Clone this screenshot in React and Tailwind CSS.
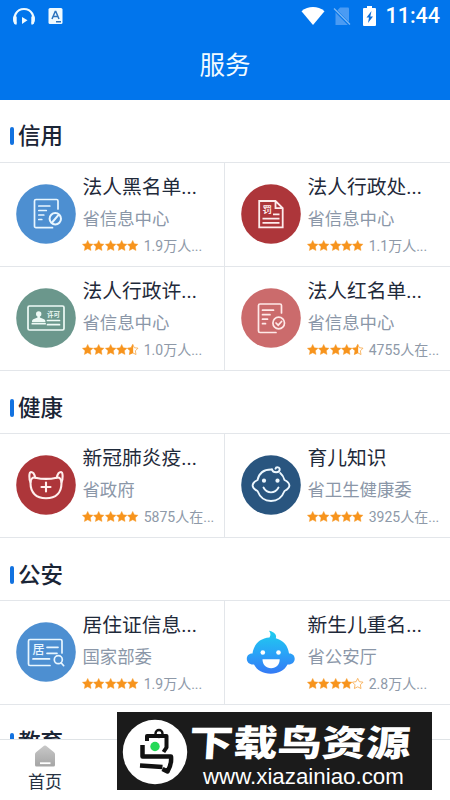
import React from "react";

const BlacklistIcon = () => (
  <svg viewBox="0 0 60 60" className="size-[60px]" fill="none" stroke="#e8f6ff" strokeWidth="1.7" strokeLinecap="round">
    <circle cx="30" cy="30" r="29.8" fill="#4d8fd1" stroke="none" />
    <path d="M36.5 43.7H20a1.5 1.5 0 0 1-1.5-1.5V17a1.5 1.5 0 0 1 1.5-1.5h20.5A1.5 1.5 0 0 1 42 17v8" />
    <path d="M22.8 22h11M22.8 26.5h7.5M22.8 31h5M22.8 35.5h3" />
    <circle cx="39.3" cy="34.7" r="5.7" strokeWidth="2" />
    <path d="m36.5 38 5.6-6.6" strokeWidth="2" />
  </svg>
);

const PenaltyIcon = () => (
  <svg viewBox="0 0 60 60" className="size-[60px]" fill="none" stroke="#fdecec" strokeWidth="1.8">
    <circle cx="30" cy="30" r="29.8" fill="#ad363a" stroke="none" />
    <path d="M34.5 17H18.2v26.3h23.5V24.2zM34.5 17v7.2h7.2" />
    <text x="21.5" y="29.2" fontSize="9.5" fontWeight="700" fill="#fdecec" stroke="none" className="font-['Noto_Sans_CJK_SC',sans-serif]">罚</text>
    <path d="M32 30.3h6.5M21.5 34.6h17M21.5 38.9h17" />
  </svg>
);

const LicenseIcon = () => (
  <svg viewBox="0 0 60 60" className="size-[60px]" fill="none" stroke="#eefaf6" strokeWidth="1.7" strokeLinecap="round">
    <circle cx="30" cy="30" r="29.8" fill="#6b978c" stroke="none" />
    <rect x="12" y="18" width="36" height="24" rx="1.5" />
    <circle cx="22.7" cy="26" r="2.7" fill="#eefaf6" stroke="none" />
    <path d="M21.5 27h2.4v2.5l4.2 1.8c1 .6 1.3 1.2 1.3 2.7H16c0-1.5.3-2.1 1.3-2.7l4.2-1.8z" fill="#eefaf6" stroke="none" />
    <path d="M16.3 35.7h12.8" />
    <text x="31" y="28.7" fontSize="6.5" fontWeight="700" fill="#eefaf6" stroke="none" className="font-['Noto_Sans_CJK_SC',sans-serif]">许可</text>
    <path d="M31.5 32.5h12M31.5 36.7h12" />
  </svg>
);

const RedListIcon = () => (
  <svg viewBox="0 0 60 60" className="size-[60px]" fill="none" stroke="#ffe9e8" strokeWidth="1.7" strokeLinecap="round">
    <circle cx="30" cy="30" r="29.8" fill="#cb6b6c" stroke="none" />
    <path d="M35 44.5H19a1.5 1.5 0 0 1-1.5-1.5V17.5A1.5 1.5 0 0 1 19 16h20a1.5 1.5 0 0 1 1.5 1.5V25" />
    <path d="M21.5 22.2h11M21.5 26.7h7.5M21.5 31.2h5M21.5 35.7h3" />
    <circle cx="37.7" cy="35" r="5.8" />
    <path d="m35 35 2.2 2.2 3.4-3.7" />
  </svg>
);

const MaskIcon = () => (
  <svg viewBox="0 0 60 60" className="size-[60px]" fill="none" stroke="#fff0ee" strokeWidth="2.1" strokeLinecap="round" strokeLinejoin="round">
    <circle cx="30" cy="30" r="29.8" fill="#ad363a" stroke="none" />
    <path d="M19.5 22.7c7 1.6 14 1.6 21 0 3.200-.8 5 1.500 5 5.300 0 9.500-5.500 15.200-15.500 15.200S14.500 37.500 14.500 28c0-3.800 1.800-6.100 5-5.300z" />
    <path d="M14.500 27c-1.500-3-1.700-9.800.5-10 2 0 3.600 2.700 4.200 5.600M45.500 27c1.500-3 1.700-9.800-.5-10-2 0-3.600 2.700-4.200 5.600" />
    <path d="M30 27.500v9M25.500 32h9" />
  </svg>
);

const ParentingIcon = () => (
  <svg viewBox="0 0 60 60" className="size-[60px]" fill="none" stroke="#eef8ff" strokeWidth="1.900" strokeLinecap="round" strokeLinejoin="round">
    <circle cx="30" cy="30" r="29.8" fill="#29557f" stroke="none" />
    <path d="M31 14.500c-8.500-.3-13 3.700-14.500 10.500-6 3-7 7.500 0 11 2.500 6.500 7.500 10 13.500 10s11-3.500 13.500-10c7-3.500 6-8 0-11-.8-3-2.200-5.300-4.300-7" />
    <path d="M31 14.500c1 3.800 7.700 3.700 7.700-.2 0-2.300-3.700-2.700-4.200-.6" />
    <circle cx="23" cy="25.700" r="2.100" fill="#eef8ff" stroke="none" />
    <circle cx="36.500" cy="25.700" r="2.100" fill="#eef8ff" stroke="none" />
    <path d="M22.500 32.500c3.500 6.500 11.500 6.500 15 0" />
  </svg>
);

const ResidenceIcon = () => (
  <svg viewBox="0 0 60 60" className="size-[60px]" fill="none" stroke="#e8f6ff" strokeWidth="1.700" strokeLinecap="round">
    <circle cx="30" cy="30" r="29.8" fill="#4d8fd1" stroke="none" />
    <path d="M34 43.500H14a1.500 1.500 0 0 1-1.500-1.500V19a1.500 1.500 0 0 1 1.500-1.500h30.500A1.500 1.500 0 0 1 46 19v12" />
    <text x="16.500" y="32" fontSize="12" fontWeight="500" fill="#e8f6ff" stroke="none" className="font-['Noto_Sans_CJK_SC',sans-serif]">居</text>
    <path d="M31 25.300h11M31 31.300h10M17 36.900h16.500" />
    <circle cx="42.300" cy="37.700" r="4" />
    <path d="m45.300 41 2.400 2.700" />
  </svg>
);

const NewbornIcon = () => (
  <svg viewBox="0 0 60 60" className="size-[60px]">
    <defs>
      <linearGradient id="newborn" gradientUnits="userSpaceOnUse" x1="0" y1="9" x2="0" y2="52">
        <stop offset="0" stopColor="#20cdee" />
        <stop offset="0.5" stopColor="#29a5f7" />
        <stop offset="1" stopColor="#3579f5" />
      </linearGradient>
    </defs>
    <path
      fill="url(#newborn)"
      d="M28 8.700c4.500 1 8.200 3.500 6.800 7.600C42.500 18.300 47 24 48 31.500c3.500-.2 5.700 2.300 5.700 5.300 0 3.700-3 6.200-7.200 5.700C43.500 48.500 37.500 51.700 29.700 51.700S16 48.500 13 42.500c-4.200.5-7.200-2-7.200-5.700 0-3 2.200-5.500 5.700-5.300C12.700 22.500 19 16 28.500 15.500c1.500-2.500 1-4.800-.5-6.800z"
    />
    <circle cx="21.800" cy="30.500" r="2.300" fill="#fff" />
    <circle cx="37.500" cy="30.500" r="2.300" fill="#fff" />
    <path d="M21.500 37.300h17.200c0 5.500-3.500 9-8.600 9s-8.600-3.500-8.600-9z" fill="#fff" />
  </svg>
);

const sections = [
  {
    title: "信用",
    items: [
      { name: "法人黑名单...", dept: "省信息中心", rating: 5, count: "1.9万人...", icon: <BlacklistIcon /> },
      { name: "法人行政处...", dept: "省信息中心", rating: 5, count: "1.1万人...", icon: <PenaltyIcon /> },
      { name: "法人行政许...", dept: "省信息中心", rating: 4.5, count: "1.0万人...", icon: <LicenseIcon /> },
      { name: "法人红名单...", dept: "省信息中心", rating: 4.5, count: "4755人在...", icon: <RedListIcon /> },
    ],
  },
  {
    title: "健康",
    items: [
      { name: "新冠肺炎疫...", dept: "省政府", rating: 5, count: "5875人在...", icon: <MaskIcon /> },
      { name: "育儿知识", dept: "省卫生健康委", rating: 5, count: "3925人在...", icon: <ParentingIcon /> },
    ],
  },
  {
    title: "公安",
    items: [
      { name: "居住证信息...", dept: "国家部委", rating: 5, count: "1.9万人...", icon: <ResidenceIcon /> },
      { name: "新生儿重名...", dept: "省公安厅", rating: 4, count: "2.8万人...", icon: <NewbornIcon /> },
    ],
  },
  { title: "教育", items: [] },
];

const STAR = "M6 .4l1.700 3.500 3.900.5-2.800 2.800.7 3.900L6 9.300l-3.500 1.800.7-3.900L.4 4.400l3.900-.5z";

const Star = ({ fill }) => (
  <svg viewBox="0 0 12 12" className="size-[11.4px]">
    {fill === 1 && <path d={STAR} fill="#f7941d" stroke="#f7941d" strokeWidth="0.4" strokeLinejoin="round" />}
    {fill < 1 && <path d={STAR} fill="none" stroke="#f7a23c" strokeWidth="0.8" />}
    {fill === 0.5 && <path d="M6.500 .4v9.100L2.500 11.100l.7-3.900L.4 4.400l3.900-.5L6 .4z" fill="#f7941d" />}
  </svg>
);

const ServiceCard = ({ item }) => (
  <div className="flex h-[104.3px] border-b border-[#e3e6ea] pl-4 odd:border-r">
    <div className="mt-[21px] shrink-0">{item.icon}</div>
    <div className="ml-[6.4px] pt-[10px] whitespace-nowrap">
      <p className="h-[30px] text-[19.8px] leading-[30px] text-[#1f2a3a]">{item.name}</p>
      <p className="mt-[1px] h-[29px] text-[17.4px] leading-[30px] text-[#8b97a8]">{item.dept}</p>
      <div className="mt-[3px] flex h-5 items-center">
        <div className="-ml-[0.6px] flex">
          {[0, 1, 2, 3, 4].map((i) => (
            <Star key={i} fill={Math.max(0, Math.min(1, item.rating - i))} />
          ))}
        </div>
        <span className="ml-[5px] text-[14px] leading-5 text-[#8e99a8]">{item.count}</span>
      </div>
    </div>
  </div>
);

const Section = ({ section }) => (
  <section>
    <div className="flex h-[62.7px] items-center border-b border-[#e3e6ea] pt-[11px] pl-[10px]">
      <span className="h-[18px] w-1 rounded-xs bg-[#1272e0]" />
      <h2 className="ml-1 text-[22.5px] leading-8 font-medium text-[#1a2536]">{section.title}</h2>
    </div>
    <div className="grid grid-cols-2">
      {section.items.map((item) => (
        <ServiceCard key={item.name} item={item} />
      ))}
    </div>
  </section>
);

const StatusBar = () => (
  <div className="flex h-8 items-center pr-[10px] pl-3">
    <svg viewBox="0 0 24 20" className="h-5 w-6">
      <path d="M3.500 17.500c-3-7 1-14.500 8.500-14.500s11.500 7.500 8.500 14.500" fill="none" stroke="#effaff" strokeWidth="2.200" />
      <path d="M1.500 10.500h3.200v8H3C1.300 17 .6 13 1.500 10.500zM22.500 10.500h-3.200v8H21c1.700-1.500 2.400-5.500 1.500-8zM10 11l5.500 3.300L10 18z" fill="#effaff" />
    </svg>
    <svg viewBox="0 0 15 16" className="ml-3 h-4 w-[15px]">
      <rect x="0.5" width="14" height="16" rx="1.500" fill="#effaff" />
      <path d="M4 11 7.200 3.500h.6L11 11M5.200 8.500h4.600M8 13.700h5" fill="none" stroke="#2d73bd" strokeWidth="1.500" />
    </svg>
    <div className="ml-auto flex items-center">
      <svg viewBox="0 0 24 20" className="h-5 w-6">
        <path d="M.5 5.200C7.200-.3 16.800-.3 23.500 5.200L12 19z" fill="#fff" />
      </svg>
      <svg viewBox="0 0 18 20" className="ml-2 h-5 w-[18px]">
        <path d="M7 1.500h8a1 1 0 0 1 1 1V19H2.500V6.500z" fill="#4a9bf3" />
        <path d="M1 3l16 16" stroke="#0175ec" strokeWidth="3" />
        <path d="M1 2.500l16 16" stroke="#7fb9f5" strokeWidth="1.200" />
      </svg>
      <svg viewBox="0 0 13 20" className="ml-3 h-5 w-[13px]">
        <path d="M4 0h5v2h3a1 1 0 0 1 1 1v16a1 1 0 0 1-1 1H1a1 1 0 0 1-1-1V3a1 1 0 0 1 1-1h3z" fill="#fff" />
        <path d="M8.500 5 3.500 11.500H6L5 17l5-6.500H7.300z" fill="#0d6fda" />
      </svg>
      <span className="ml-[9px] text-[21.5px] leading-8 font-medium text-white">11:44</span>
    </div>
  </div>
);

const DownloadBanner = () => (
  <div className="absolute top-[712px] left-[117px] flex h-[78px] w-[315px] bg-[#1b1b1b]">
    <svg viewBox="0 0 66 66" className="mt-[7px] ml-[5px] size-[66px] shrink-0">
      <circle cx="33" cy="33" r="32.200" fill="#fff" />
      <circle cx="37" cy="14.500" r="3.500" fill="none" stroke="#111" strokeWidth="2.400" />
      <path d="M25 22v-5h19.500v11.500L41.500 33" fill="none" stroke="#111" strokeWidth="4" strokeLinejoin="round" />
      <path d="M20.500 26v11.500h28.500q.8 8-3.500 15l-5-2.500M18 46.500l22.500 1.500" fill="none" stroke="#111" strokeWidth="4.500" strokeLinejoin="round" />
      <circle cx="33" cy="27.500" r="4.700" fill="#25d957" />
    </svg>
    <div className="whitespace-nowrap text-white">
      <p className="mt-[11px] ml-px h-[43px] origin-left scale-x-[1.23] -skew-x-3 text-[36px] leading-[43px] font-black">下载鸟资源</p>
      <p className="ml-[15px] font-['Liberation_Sans',Arial,sans-serif] text-[22.3px] leading-[21px]">www.xiazainiao.com</p>
    </div>
  </div>
);

const App = () => {
  return (
    <div className="relative flex h-[800px] w-[450px] flex-col overflow-hidden bg-white font-[Roboto,'Noto_Sans_CJK_SC',sans-serif]">
      <header className="h-[100px] shrink-0 bg-[#0175ec]">
        <StatusBar />
        <h1 className="mt-[17px] text-center text-[25.5px] leading-8 text-[#f2faff]">服务</h1>
      </header>

      <main className="min-h-0 flex-1 overflow-hidden">
        {sections.map((section) => (
          <Section key={section.title} section={section} />
        ))}
      </main>

      {/* bottom navigation */}
      <nav className="h-[61px] shrink-0 border-t border-[#dfe3e6] bg-white">
        <div className="flex w-[90px] flex-col items-center pt-[5px]">
          <svg viewBox="0 0 20 22" className="h-[22px] w-5">
            <defs>
              <linearGradient id="home" x1="0" y1="0" x2="0" y2="1">
                <stop offset="0" stopColor="#c8c8c8" />
                <stop offset="1" stopColor="#a5a5a5" />
              </linearGradient>
            </defs>
            <path d="M9 .8q1-.8 2 0l8 6.400q1 .8 1 2V20q0 1.500-1.500 1.500h-17Q0 21.500 0 20V9.200q0-1.200 1-2z" fill="url(#home)" />
            <path d="M5 18.200h10.500" stroke="#fff" strokeWidth="1.800" />
          </svg>
          <span className="mt-[3px] text-[17px] leading-6 text-[#263142]">首页</span>
        </div>
      </nav>

      <DownloadBanner />
    </div>
  );
};

export default App;
